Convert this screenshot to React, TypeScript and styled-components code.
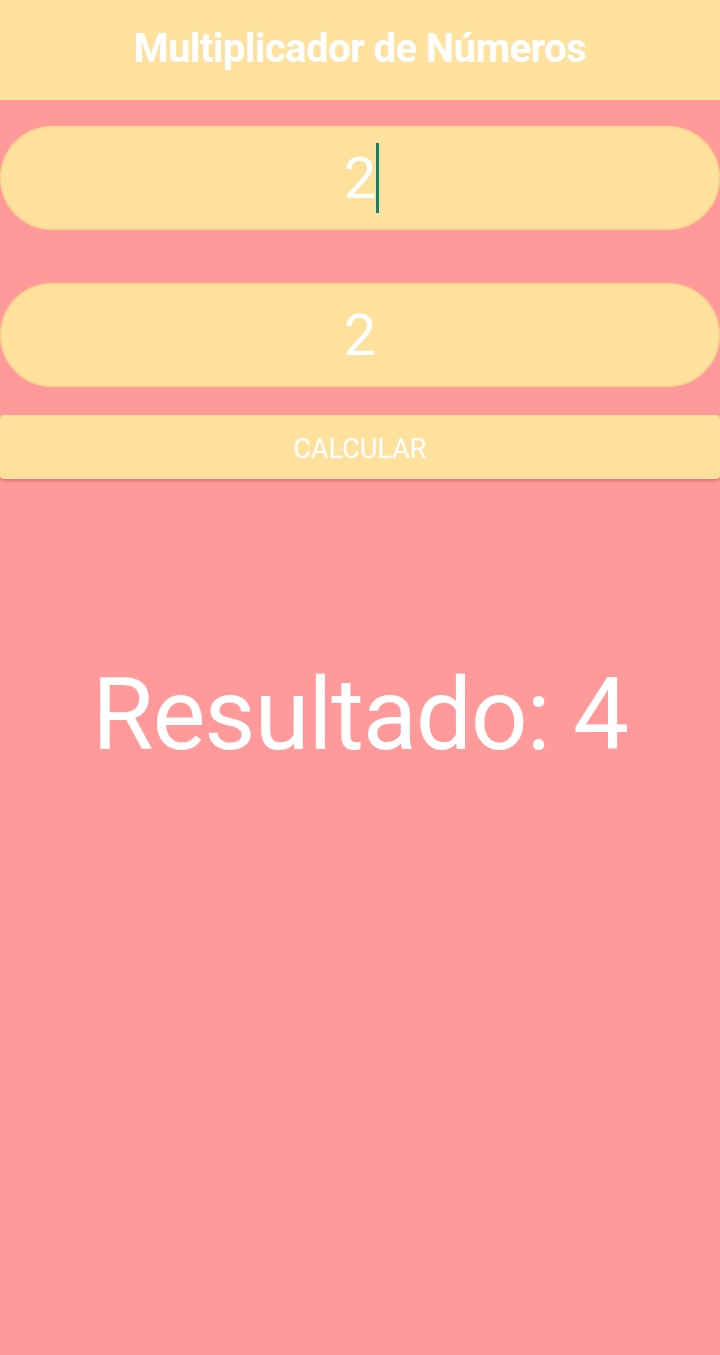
import React from "react";
import styled, { createGlobalStyle } from "styled-components";

const GlobalStyle = createGlobalStyle`
  html, body {
    margin: 0;
    padding: 0;
    background: #ff999a;
  }
  body {
    font-family: Roboto, "Liberation Sans", sans-serif;
  }
`;

const Screen = styled.div`
  width: 720px;
  min-height: 1355px;
  background: #ff999a;
  display: flex;
  flex-direction: column;
`;

const Header = styled.header`
  height: 100px;
  background: #fee19d;
  display: flex;
  align-items: center;
  justify-content: center;
  box-sizing: border-box;
  padding-bottom: 4px;
`;

const Title = styled.h1`
  margin: 0;
  font-family: Roboto, "Liberation Sans", sans-serif;
  font-weight: 700;
  font-size: 40px;
  color: #ffffff;
  letter-spacing: -0.55px;
`;

const Form = styled.div`
  display: flex;
  flex-direction: column;
  padding-top: 26px;
`;

const Field = styled.div<{ $gapAfter: number }>`
  height: 104px;
  box-sizing: border-box;
  margin: 0 0 ${(p) => p.$gapAfter}px 0;
  border-radius: 52px;
  background: #fee19d;
  border: 2px solid #f9d892;
  display: flex;
  align-items: center;
  justify-content: center;
`;

const ValueWrap = styled.span`
  position: relative;
  font-family: Roboto, "Liberation Sans", sans-serif;
  font-size: 58px;
  line-height: 1;
  color: #ffffff;
`;

const Caret = styled.span`
  position: absolute;
  left: 100%;
  top: -6px;
  width: 3px;
  height: 70px;
  background: #14806a;
`;

const Button = styled.button`
  height: 64px;
  border: none;
  border-radius: 4px;
  background: #fee19d;
  color: #ffffff;
  font-family: Roboto, "Liberation Sans", sans-serif;
  font-size: 27px;
  text-transform: uppercase;
  box-shadow: 0 2px 3px rgba(150, 60, 60, 0.35);
  padding: 4px 0 0 0;
  cursor: pointer;
`;

const Result = styled.div`
  margin-top: 176px;
  text-align: center;
  font-family: Roboto, "Liberation Sans", sans-serif;
  font-size: 100px;
  letter-spacing: -1.3px;
  line-height: 1.2;
  color: #ffffff;
`;

export default function App() {
  return (
    <>
      <GlobalStyle />
      <Screen>
        <Header>
          <Title>Multiplicador de Números</Title>
        </Header>
        <Form>
          <Field $gapAfter={53}>
            <ValueWrap>
              2
              <Caret />
            </ValueWrap>
          </Field>
          <Field $gapAfter={28}>
            <ValueWrap>2</ValueWrap>
          </Field>
          <Button>Calcular</Button>
        </Form>
        <Result>Resultado: 4</Result>
      </Screen>
    </>
  );
}
